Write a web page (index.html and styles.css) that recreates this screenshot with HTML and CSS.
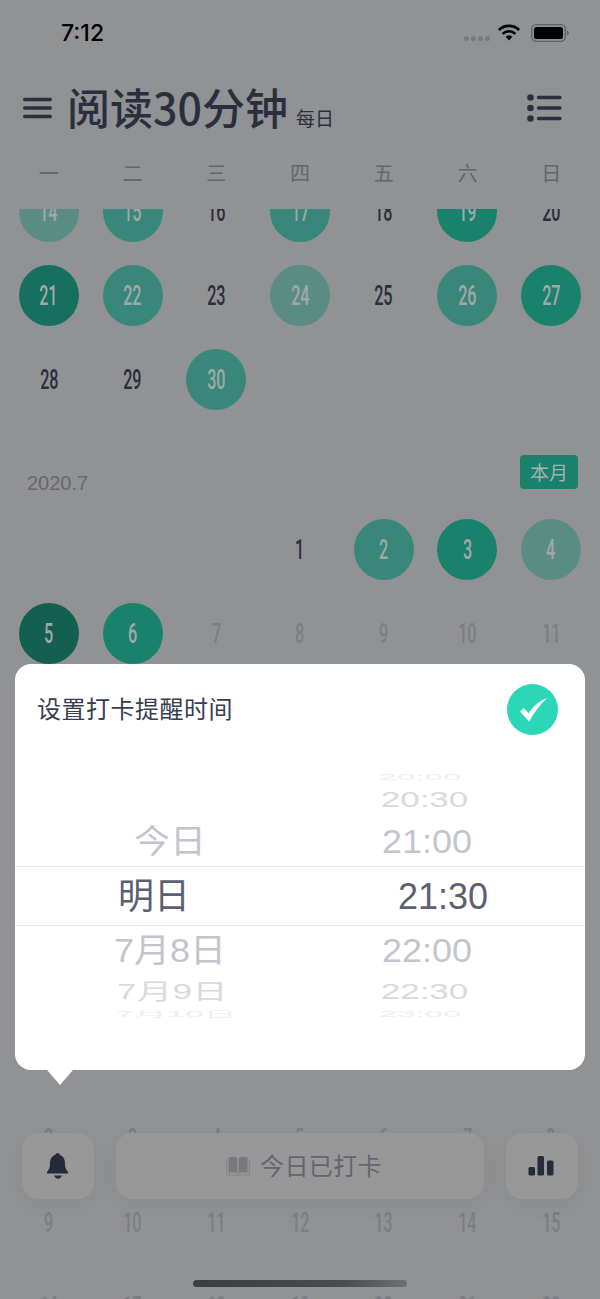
FILE: index.html
```html
<!DOCTYPE html>
<html lang="zh-CN">
<head>
    <meta charset="UTF-8">
    <meta name="viewport" content="width=device-width, initial-scale=1.0">
    <title>阅读30分钟</title>
    <link rel="stylesheet" href="styles.css">
</head>
<body>
    <div class="page">
        <div class="status">
            <span class="clock">7:12</span>
            <div class="status-icons">
                <span class="signal"><i></i><i></i><i></i><i></i></span>
                <svg class="wifi" width="24" height="17" viewBox="0 0 24 17">
                    <path d="M12 16.5 8.6 12.8a5 5 0 0 1 6.8 0z" fill="#000"/>
                    <path d="M5.6 9.9a9.2 9.2 0 0 1 12.8 0" fill="none" stroke="#000" stroke-width="2.6"/>
                    <path d="M1.9 6a14.6 14.6 0 0 1 20.2 0" fill="none" stroke="#000" stroke-width="2.8"/>
                </svg>
                <svg class="battery" width="38" height="18" viewBox="0 0 38 18">
                    <rect x="0.7" y="0.7" width="33.6" height="16.6" rx="4.5" fill="none" stroke="#606163" stroke-width="1.3"/>
                    <rect x="3" y="3" width="29" height="12" rx="2.6" fill="#000"/>
                    <path d="M36 6.5c1.2.4 1.8 1.3 1.8 2.5s-.6 2.100-1.800 2.500z" fill="#606163"/>
                </svg>
            </div>
        </div>

        <div class="topbar">
            <svg class="menu" width="29" height="22" viewBox="0 0 29 22">
                <path d="M1.700 2.500H27.300M1.700 11H27.300M1.700 19.500H27.300" stroke="#2b2f3d" stroke-width="3.400" stroke-linecap="round"/>
            </svg>
            <h1 class="title">阅读30分钟</h1>
            <span class="freq">每日</span>
            <svg class="list" width="35" height="28" viewBox="0 0 35 28">
                <circle cx="3.500" cy="3.500" r="3.300" fill="#2b2f3d"/>
                <circle cx="3.500" cy="14" r="3.300" fill="#2b2f3d"/>
                <circle cx="3.500" cy="24.500" r="3.300" fill="#2b2f3d"/>
                <path d="M11.500 3.500H33M11.500 14H33M11.500 24.500H33" stroke="#2b2f3d" stroke-width="3.400" stroke-linecap="round"/>
            </svg>
        </div>

        <div class="weekdays">
            <span>一</span><span>二</span><span>三</span><span>四</span><span>五</span><span>六</span><span>日</span>
        </div>

        <div class="scroller">
            <div class="calendar">
                <div class="grid">
                    <div class="cell"><span class="day lv1"><span class="num">14</span></span></div>
                    <div class="cell"><span class="day lv2"><span class="num">15</span></span></div>
                    <div class="cell"><span class="num">16</span></div>
                    <div class="cell"><span class="day lv2"><span class="num">17</span></span></div>
                    <div class="cell"><span class="num">18</span></div>
                    <div class="cell"><span class="day lv3"><span class="num">19</span></span></div>
                    <div class="cell"><span class="num">20</span></div>
                    <div class="cell"><span class="day lv4"><span class="num">21</span></span></div>
                    <div class="cell"><span class="day lv2"><span class="num">22</span></span></div>
                    <div class="cell"><span class="num">23</span></div>
                    <div class="cell"><span class="day lv1"><span class="num">24</span></span></div>
                    <div class="cell"><span class="num">25</span></div>
                    <div class="cell"><span class="day lv2"><span class="num">26</span></span></div>
                    <div class="cell"><span class="day lv3"><span class="num">27</span></span></div>
                    <div class="cell"><span class="num">28</span></div>
                    <div class="cell"><span class="num">29</span></div>
                    <div class="cell"><span class="day lv2"><span class="num">30</span></span></div>
                </div>

                <div class="month">
                    <span class="month-name">2020.7</span>
                    <span class="this-month">本月</span>
                </div>
                <div class="grid">
                    <div class="cell"></div>
                    <div class="cell"></div>
                    <div class="cell"></div>
                    <div class="cell"><span class="num">1</span></div>
                    <div class="cell"><span class="day lv2"><span class="num">2</span></span></div>
                    <div class="cell"><span class="day lv3"><span class="num">3</span></span></div>
                    <div class="cell"><span class="day lv1"><span class="num">4</span></span></div>
                    <div class="cell"><span class="day lv5"><span class="num">5</span></span></div>
                    <div class="cell"><span class="day lv3"><span class="num">6</span></span></div>
                    <div class="cell later"><span class="num">7</span></div>
                    <div class="cell later"><span class="num">8</span></div>
                    <div class="cell later"><span class="num">9</span></div>
                    <div class="cell later"><span class="num">10</span></div>
                    <div class="cell later"><span class="num">11</span></div>
                </div>

                <div class="month month-gap"></div>
                <div class="grid later-block">
                    <div class="cell"></div>
                    <div class="cell"></div>
                    <div class="cell"></div>
                    <div class="cell"></div>
                    <div class="cell"></div>
                    <div class="cell"></div>
                    <div class="cell later"><span class="num">1</span></div>
                    <div class="cell later"><span class="num">2</span></div>
                    <div class="cell later"><span class="num">3</span></div>
                    <div class="cell later"><span class="num">4</span></div>
                    <div class="cell later"><span class="num">5</span></div>
                    <div class="cell later"><span class="num">6</span></div>
                    <div class="cell later"><span class="num">7</span></div>
                    <div class="cell later"><span class="num">8</span></div>
                    <div class="cell later"><span class="num">9</span></div>
                    <div class="cell later"><span class="num">10</span></div>
                    <div class="cell later"><span class="num">11</span></div>
                    <div class="cell later"><span class="num">12</span></div>
                    <div class="cell later"><span class="num">13</span></div>
                    <div class="cell later"><span class="num">14</span></div>
                    <div class="cell later"><span class="num">15</span></div>
                    <div class="cell later"><span class="num">16</span></div>
                    <div class="cell later"><span class="num">17</span></div>
                    <div class="cell later"><span class="num">18</span></div>
                    <div class="cell later"><span class="num">19</span></div>
                    <div class="cell later"><span class="num">20</span></div>
                    <div class="cell later"><span class="num">21</span></div>
                    <div class="cell later"><span class="num">22</span></div>
                </div>
            </div>
        </div>

        <div class="actions">
            <div class="action-btn">
                <svg width="22" height="26" viewBox="0 0 22 26">
                    <path d="M11 0c1 0 1.800.8 1.800 1.900 3.500 1 5.200 4 5.200 8 0 4 .6 6 3 9.100.5.9 0 1.500-1 1.500H1c-1 0-1.500-.6-1-1.500 2.400-3.100 3-5.100 3-9.100 0-4 1.700-7 5.200-8C8.200.8 10 0 11 0z" fill="#262b3a"/>
                    <path d="M7 22.500h8c-.8 2-2.300 3.300-4 3.300s-3.200-1.300-4-3.300z" fill="#262b3a"/>
                </svg>
            </div>
            <div class="action-main">
                <svg width="24" height="20" viewBox="0 0 24 20">
                    <path d="M0.600 3.500V18.800H10.500C11 19.500 13 19.500 13.500 18.800H23.400V3.500" fill="none" stroke="#858688" stroke-width="1.200"/>
                    <path d="M2.500 1.500C5.500 0.200 9 0.300 11.300 2.200V17.500C9 16.200 5.500 16 2.500 17z" fill="#77797c"/>
                    <path d="M21.500 1.500C18.500 0.200 15 0.300 12.700 2.200V17.500C15 16.200 18.500 16 21.500 17z" fill="#77797c"/>
                </svg>
                <span class="action-label">今日已打卡</span>
            </div>
            <div class="action-btn">
                <svg class="chart" width="26" height="20" viewBox="0 0 26 20">
                    <rect x="0.500" y="11" width="6.500" height="8.500" rx="1.500" fill="#262b3a"/>
                    <rect x="9.500" y="0" width="6.500" height="19.500" rx="1.500" fill="#262b3a"/>
                    <rect x="19" y="4.500" width="6.500" height="15" rx="1.500" fill="#262b3a"/>
                </svg>
            </div>
        </div>

        <div class="home-bar"></div>

        <div class="popup">
            <div class="popup-head">
                <span class="popup-title">设置打卡提醒时间</span>
                <svg class="confirm" width="51" height="51" viewBox="0 0 51 51">
                    <circle cx="25.500" cy="25.500" r="25.500" fill="#2cd7b8"/>
                    <path d="M13 27.500 16.800 24 21.700 29.200C26 22.500 32 17 40 14 33 21 27 28.500 22.200 37.500z" fill="#fff"/>
                </svg>
            </div>
            <div class="wheel">
                <div class="wheel-row row-far">
                    <span></span><span class="squash-1">20:00</span>
                </div>
                <div class="wheel-row row-near">
                    <span></span><span class="squash-2">20:30</span>
                </div>
                <div class="wheel-row row-adj">
                    <span class="squash-3">今日</span><span class="squash-3">21:00</span>
                </div>
                <div class="wheel-row row-sel">
                    <span>明日</span><span>21:30</span>
                </div>
                <div class="wheel-row row-adj row-adj-b">
                    <span class="squash-3">7月8日</span><span class="squash-3">22:00</span>
                </div>
                <div class="wheel-row row-near row-near-b">
                    <span class="squash-2">7月9日</span><span class="squash-2">22:30</span>
                </div>
                <div class="wheel-row row-far row-far-b">
                    <span class="squash-1">7月10日</span><span class="squash-1">23:00</span>
                </div>
            </div>
        </div>
    </div>
</body>
</html>
```

FILE: styles.css
```css
body {
    margin: 0;
    padding: 0;
    background-color: #919294;
    font-family: "Liberation Sans", "Noto Sans CJK SC", sans-serif;
}

.page {
    position: relative;
    width: 600px;
    height: 1299px;
    overflow: hidden;
    display: flex;
    flex-direction: column;
}

/* status bar */
.status {
    height: 66px;
    display: flex;
    justify-content: space-between;
    align-items: flex-start;
    padding: 0 31px 0 61px;
    box-sizing: border-box;
}

.clock {
    margin-top: 20px;
    font-family: Inter, sans-serif;
    font-size: 23px;
    line-height: 26px;
    font-weight: 500;
    color: #000;
}

.status-icons {
    display: flex;
    align-items: flex-start;
    margin-top: 24px;
}

.signal {
    display: flex;
    gap: 2px;
    margin: 12px 8px 0 0;
}

.signal i {
    width: 5px;
    height: 5px;
    border-radius: 50%;
    background-color: #77797b;
}

.wifi {
    margin-left: -1px;
}

.battery {
    margin-left: 10px;
}

/* title row */
.topbar {
    height: 84px;
    display: flex;
    align-items: center;
    padding: 0 38px 0 23px;
}

.title {
    margin: -4px 0 0 15px;
    font-family: "Noto Sans CJK SC", sans-serif;
    font-size: 43px;
    line-height: 50px;
    font-weight: 500;
    color: #2b2f3d;
}

.freq {
    margin: 18px 0 0 8px;
    font-family: "Noto Sans CJK SC", sans-serif;
    font-size: 19px;
    color: #2b2f3d;
}

.list {
    margin-left: auto;
}

.weekdays {
    height: 59px;
    display: grid;
    grid-template-columns: repeat(7, 1fr);
    padding: 0 7px 15px;
    box-sizing: border-box;
    align-items: center;
    text-align: center;
    font-family: "Noto Sans CJK SC", sans-serif;
    font-size: 20px;
    color: #62646e;
}

/* calendar */
.scroller {
    flex: 1;
    overflow: hidden;
}

.calendar {
    margin-top: -40px;
}

.grid {
    display: grid;
    grid-template-columns: repeat(7, 1fr);
    padding: 0 7px;
}

.cell {
    height: 84px;
    display: flex;
    align-items: center;
    justify-content: center;
    color: #2b2e3c;
}

.cell.later {
    color: #7b7d84;
}

.num {
    display: inline-block;
    margin-top: 2px;
    font-family: Roboto, sans-serif;
    font-size: 27px;
    font-weight: 500;
    line-height: 30px;
    transform: scaleX(0.6);
}

.day {
    width: 60px;
    height: 61px;
    border-radius: 50%;
    display: flex;
    align-items: center;
    justify-content: center;
    color: #a0a9a7;
}

.lv1 { background-color: #5b8c83; }
.lv2 { background-color: #39877a; }
.lv3 { background-color: #1a816c; }
.lv4 { background-color: #17705f; }
.lv5 { background-color: #135f50; }

.month {
    height: 86px;
    padding: 34px 22px 0 27px;
    box-sizing: border-box;
    display: flex;
    justify-content: space-between;
    align-items: flex-start;
}

.month-name {
    margin-top: 16px;
    font-size: 20px;
    line-height: 24px;
    color: #66686e;
}

.this-month {
    width: 58px;
    height: 34px;
    border-radius: 4px;
    background-color: #1a816c;
    color: #a3b3ae;
    font-family: "Noto Sans CJK SC", sans-serif;
    font-size: 19px;
    line-height: 33px;
    text-align: center;
}

.month-gap {
    margin-top: 251px;
}

/* bottom actions */
.actions {
    position: absolute;
    left: 22px;
    right: 22px;
    top: 1133px;
    height: 66px;
    display: flex;
    gap: 22px;
}

.action-btn,
.action-main {
    background-color: #989898;
    border-radius: 16px;
    box-shadow: 0 6px 24px rgba(0, 0, 0, 0.05);
    display: flex;
    align-items: center;
    justify-content: center;
}

.action-btn {
    width: 72px;
}

.chart {
    margin-left: -2px;
}

.action-main {
    flex: 1;
    gap: 10px;
    padding-left: 8px;
    font-family: "Noto Sans CJK SC", sans-serif;
    font-size: 24px;
    color: #62656f;
}

.action-label {
    margin-top: -4px;
    letter-spacing: 0.4px;
}

.home-bar {
    position: absolute;
    left: 193px;
    top: 1280px;
    width: 214px;
    height: 7px;
    border-radius: 4px;
    background: linear-gradient(90deg, #3c3d3f 0%, #4a4b4d 70%, #6f7072 100%);
}

/* reminder popup */
.popup {
    position: absolute;
    left: 15px;
    right: 15px;
    top: 664px;
    height: 406px;
    box-sizing: border-box;
    background-color: #fff;
    border-radius: 16px;
}

.popup::after {
    content: "";
    position: absolute;
    left: 32px;
    bottom: -15px;
    border-top: 15px solid #fff;
    border-left: 13px solid transparent;
    border-right: 13px solid transparent;
}

.popup-head {
    display: flex;
    justify-content: space-between;
    align-items: center;
    padding: 20px 27px 0 22px;
}

.popup-title {
    margin-top: -4px;
    font-family: "Noto Sans CJK SC", sans-serif;
    font-size: 24px;
    letter-spacing: 0.5px;
    color: #383e4f;
}

.wheel {
    margin-top: 35px;
}

.wheel-row {
    display: grid;
    grid-template-columns: 310px 204px;
    text-align: center;
    align-items: center;
    overflow: hidden;
    box-sizing: border-box;
    font-size: 36px;
}

.wheel-row span {
    display: block;
}

.row-far {
    height: 14px;
    line-height: 14px;
    color: #eeeff0;
    font-size: 33px;
}

.row-far span:last-child {
    padding-right: 14px;
}

.row-near {
    height: 32px;
    line-height: 32px;
    color: #d8dadd;
    font-size: 35px;
}

.row-near span:last-child {
    padding-right: 5px;
}

.row-adj {
    height: 50px;
    padding-top: 1px;
    line-height: 48px;
    color: #c3c5cc;
}

.row-sel {
    height: 60px;
    padding-top: 2px;
    line-height: 56px;
    border-top: 1px solid #e3e4ea;
    border-bottom: 1px solid #e3e4ea;
    color: #5b6171;
}

.row-sel span:first-child {
    padding-right: 32px;
}

.row-sel span:last-child {
    padding-left: 32px;
}

.row-adj-b {
    height: 48px;
    padding-top: 2px;
    line-height: 46px;
}

.row-near-b {
    height: 35px;
    line-height: 35px;
}

.row-near-b span:first-child {
    padding-left: 5px;
    letter-spacing: 0.5px;
}

.row-far-b {
    height: 10px;
    line-height: 10px;
}

.row-far-b span:first-child {
    padding-left: 12px;
}

.squash-1 { transform: scaleY(0.25); }
.squash-2 { transform: scaleY(0.62); }
.squash-3 { transform: scaleY(0.92); }
```
